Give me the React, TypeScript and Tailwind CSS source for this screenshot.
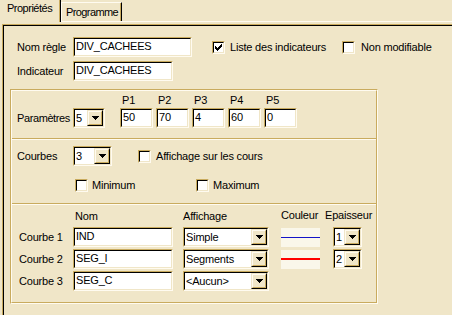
import React from "react";

const FONT = { fontFamily: '"Liberation Sans", Arial, sans-serif' };

function Arrow() {
  return (
    <svg width="7" height="4" shapeRendering="crispEdges">
      <rect x="0" y="0" width="7" height="1" fill="#000" />
      <rect x="1" y="1" width="5" height="1" fill="#000" />
      <rect x="2" y="2" width="3" height="1" fill="#000" />
      <rect x="3" y="3" width="1" height="1" fill="#000" />
    </svg>
  );
}

function Field({ w, children }: { w: string; children?: React.ReactNode }) {
  return (
    <div className={`${w} h-[20px] shrink-0 border border-t-[#C9AB5E] border-l-[#C9AB5E] border-r-[#FFFBF0] border-b-[#FFFBF0]`}>
      <div className="h-full border border-t-black border-l-black border-r-[#F0E6C8] border-b-[#F0E6C8] bg-white pl-[1px] pt-[1px] leading-[13px] whitespace-nowrap overflow-hidden">
        {children}
      </div>
    </div>
  );
}

function Select({ w, value }: { w: string; value: string }) {
  return (
    <div className={`${w} h-[20px] shrink-0 border border-t-[#C9AB5E] border-l-[#C9AB5E] border-r-[#FFFBF0] border-b-[#FFFBF0]`}>
      <div className="h-full flex border border-t-black border-l-black border-r-[#F0E6C8] border-b-[#F0E6C8] bg-white">
        <div className="flex-1 flex items-center pl-[1px] overflow-hidden whitespace-nowrap leading-[13px]">{value}</div>
        <div className="w-[16px] h-full shrink-0 border border-t-[#F0E6C8] border-l-[#F0E6C8] border-r-black border-b-black bg-[#F0E6C8]">
          <div className="h-full border border-t-[#FFFBF0] border-l-[#FFFBF0] border-r-[#C9AB5E] border-b-[#C9AB5E] flex items-center justify-center">
            <Arrow />
          </div>
        </div>
      </div>
    </div>
  );
}

function Check({ checked = false }: { checked?: boolean }) {
  return (
    <div className="w-[13px] h-[13px] shrink-0 border border-t-[#C9AB5E] border-l-[#C9AB5E] border-r-[#FFFBF0] border-b-[#FFFBF0]">
      <div className="h-full border border-t-black border-l-black border-r-[#F0E6C8] border-b-[#F0E6C8] bg-white flex items-center justify-center">
        {checked && (
          <svg width="7" height="7" shapeRendering="crispEdges">
            <rect x="6" y="0" width="1" height="1" fill="#000" />
            <rect x="5" y="1" width="2" height="1" fill="#000" />
            <rect x="0" y="2" width="1" height="1" fill="#000" />
            <rect x="4" y="2" width="3" height="1" fill="#000" />
            <rect x="0" y="3" width="2" height="1" fill="#000" />
            <rect x="3" y="3" width="3" height="1" fill="#000" />
            <rect x="0" y="4" width="5" height="1" fill="#000" />
            <rect x="1" y="5" width="3" height="1" fill="#000" />
            <rect x="2" y="6" width="1" height="1" fill="#000" />
          </svg>
        )}
      </div>
    </div>
  );
}

function Sep() {
  return <div className="h-[2px] border-t border-t-[#C9AB5E] border-b border-b-[#FFFBF0]" />;
}

function Swatch({ color }: { color: "blue" | "red" }) {
  return (
    <div className="w-[39px] h-[19px] shrink-0 bg-[#FAF7EA] flex items-center">
      {color === "blue" ? (
        <div className="w-full h-[1px] bg-[#1414C8]" />
      ) : (
        <div className="w-full h-[2px] bg-[#FF0000]" />
      )}
    </div>
  );
}

export default function App() {
  const rows = [
    { label: "Courbe 1", nom: "IND", aff: "Simple", color: "blue" as const, ep: "1" },
    { label: "Courbe 2", nom: "SEG_I", aff: "Segments", color: "red" as const, ep: "2" },
    { label: "Courbe 3", nom: "SEG_C", aff: "<Aucun>", color: null, ep: null },
  ];
  const params = [
    { p: "P1", v: "50" },
    { p: "P2", v: "70" },
    { p: "P3", v: "4" },
    { p: "P4", v: "60" },
    { p: "P5", v: "0" },
  ];

  return (
    <div className="w-[452px] h-[315px] overflow-hidden bg-[#F0E6C8] text-black text-[11px] leading-[13px] tracking-[-0.2px]" style={FONT}>
      {/* tab strip */}
      <div className="flex h-[22px] items-end">
        <div className="w-[61px] h-[22px] shrink-0 border-r border-r-black">
          <div className="h-full border-r border-r-[#C9AB5E] pl-[7px] pt-[2px] tracking-[-0.5px] whitespace-nowrap">Propriétés</div>
        </div>
        <div className="w-[61px] h-[20px] shrink-0 border-b border-b-[#FFFBF0]">
          <div className="h-full border-t border-t-[#FFFBF0] border-l border-l-[#FFFBF0] border-r border-r-black">
            <div className="h-full border-r border-r-[#C9AB5E] pl-[4px] pt-[3px] tracking-[-0.6px] whitespace-nowrap">Programme</div>
          </div>
        </div>
        <div className="flex-1 h-[1px] bg-[#FFFBF0]" />
      </div>

      {/* panel */}
      <div className="pt-[2px] pl-[2px]">
        <div className="border-t border-t-[#C9AB5E] border-l border-l-[#C9AB5E] h-[295px]">
          <div className="h-full border-t border-t-black border-l border-l-black pl-[13px] pt-[11px]">
            {/* row 1 */}
            <div className="flex items-center h-[20px]">
              <div className="w-[56px] shrink-0">Nom règle</div>
              <Field w="w-[119px]">DIV_CACHEES</Field>
              <div className="ml-[20px]">
                <Check checked />
              </div>
              <div className="w-[117px] shrink-0 pl-[5px] whitespace-nowrap">Liste des indicateurs</div>
              <Check />
              <div className="pl-[6px] whitespace-nowrap">Non modifiable</div>
            </div>
            {/* row 2 */}
            <div className="flex items-center h-[20px] mt-[4px]">
              <div className="w-[56px] shrink-0">Indicateur</div>
              <Field w="w-[100px]">DIV_CACHEES</Field>
            </div>

            {/* group frame */}
            <div className="mt-[8px] -ml-[7px] w-[368px] border border-t-[#C9AB5E] border-l-[#C9AB5E] border-r-[#FFFBF0] border-b-[#FFFBF0]">
              <div className="border border-t-[#FFFBF0] border-l-[#FFFBF0] border-r-[#C9AB5E] border-b-[#C9AB5E]">
                {/* Paramètres */}
                <div className="h-[47px] flex items-start pl-[5px] pt-[3px]">
                  <div className="flex items-center h-[20px] mt-[14px]">
                    <div className="w-[56px] shrink-0 whitespace-nowrap tracking-[-0.4px]">Paramètres</div>
                    <Select w="w-[32px]" value="5" />
                  </div>
                  <div className="flex gap-[3px] ml-[15px]">
                    {params.map((x) => (
                      <div key={x.p} className="flex flex-col">
                        <div className="h-[13px] pl-[2px]">{x.p}</div>
                        <div className="mt-[1px]">
                          <Field w="w-[33px]">{x.v}</Field>
                        </div>
                      </div>
                    ))}
                  </div>
                </div>
                <Sep />
                {/* Courbes */}
                <div className="h-[63px] pl-[5px] pt-[6px]">
                  <div className="flex items-center h-[20px]">
                    <div className="w-[56px] shrink-0">Courbes</div>
                    <Select w="w-[39px]" value="3" />
                    <div className="ml-[26px]">
                      <Check />
                    </div>
                    <div className="pl-[5px] whitespace-nowrap">Affichage sur les cours</div>
                  </div>
                  <div className="flex items-center h-[13px] mt-[13px] pl-[58px]">
                    <div className="w-[121px] shrink-0 flex items-center">
                      <Check />
                      <div className="pl-[4px]">Minimum</div>
                    </div>
                    <Check />
                    <div className="pl-[4px]">Maximum</div>
                  </div>
                </div>
                <Sep />
                {/* Courbe table */}
                <div className="h-[97px] pl-[5px] pt-[4px]">
                  <div className="flex h-[13px]">
                    <div className="w-[58px] shrink-0" />
                    <div className="w-[108px] shrink-0 pt-[1px]">Nom</div>
                    <div className="w-[98px] shrink-0 pt-[1px]">Affichage</div>
                    <div className="w-[44px] shrink-0">Couleur</div>
                    <div>Epaisseur</div>
                  </div>
                  <div className="flex flex-col gap-[2px] mt-[5px]">
                    {rows.map((r) => (
                      <div key={r.label} className="flex items-center h-[20px]">
                        <div className="w-[56px] shrink-0 pl-[2px]">{r.label}</div>
                        <Field w="w-[100px]">{r.nom}</Field>
                        <div className="ml-[10px]">
                          <Select w="w-[86px]" value={r.aff} />
                        </div>
                        {r.color && (
                          <div className="ml-[12px]">
                            <Swatch color={r.color} />
                          </div>
                        )}
                        {r.ep && (
                          <div className="ml-[13px]">
                            <Select w="w-[29px]" value={r.ep} />
                          </div>
                        )}
                      </div>
                    ))}
                  </div>
                </div>
              </div>
            </div>
          </div>
        </div>
      </div>
    </div>
  );
}
